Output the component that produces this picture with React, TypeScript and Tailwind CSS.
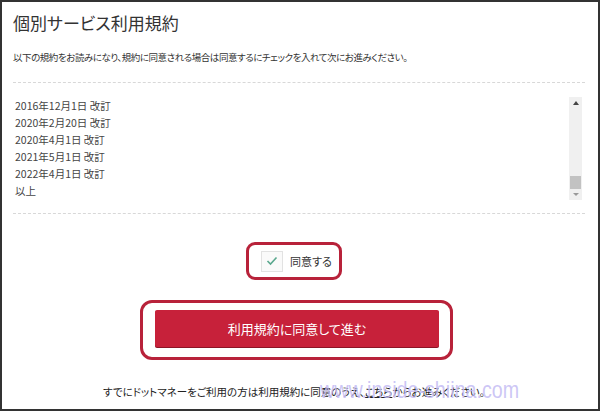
import React from "react"

const history = [
  "2016年12月1日 改訂",
  "2020年2月20日 改訂",
  "2020年4月1日 改訂",
  "2021年5月1日 改訂",
  "2022年4月1日 改訂",
  "以上",
]

export default function App() {
  return (
    <div className="relative w-[600px] h-[411px] overflow-hidden border-2 border-[#333] bg-white text-[#333] font-['Noto_Sans_CJK_JP',sans-serif] [font-feature-settings:'palt']">
      <div className="pl-[11px] pr-[13px] pt-[9px]">
        <h1 className="text-[17px] leading-[24px] font-normal">個別サービス利用規約</h1>
        <p className="mt-[14px] text-[9.5px] leading-[16px] tracking-[-0.45px]">
          以下の規約をお読みになり、規約に同意される場合は同意するにチェックを入れて次にお進みください。
        </p>
        <div className="mt-[17px] border-t border-dashed border-[#d8d8d8]" />

        {/* terms box, scrolled to the end */}
        <div className="mt-[14px] flex h-[103px]">
          <div className="flex-1 pl-[2px] text-[10.5px] leading-[17px] text-[#444]">
            {history.map(line => (
              <div key={line}>{line}</div>
            ))}
          </div>
          <div className="mr-[3px] flex w-[13px] flex-col items-center bg-[#f0f0f0]">
            <div className="mt-[4px] h-0 w-0 border-x-[3px] border-b-[4px] border-x-transparent border-b-[#444]" />
            <div className="flex-1" />
            <div className="h-[13px] w-[11px] bg-[#c2c2c2]" />
            <div className="my-[4px] h-0 w-0 border-x-[3px] border-t-[3px] border-x-transparent border-t-[#999]" />
          </div>
        </div>
        <div className="mt-[13px] border-t border-dashed border-[#d8d8d8]" />
      </div>

      <div className="mt-[28px] flex justify-center pr-[12px]">
        <label className="flex items-center rounded-[9px] border-[3px] border-[#b8223a] pl-[12px] pr-[7px] h-[38px]">
          <span className="flex h-[21px] w-[22px] items-center justify-center border border-[#e2e2e2] bg-[#fafafa]">
            <svg width="12" height="10" viewBox="0 0 12 10">
              <polyline points="1.5,5 4.5,8 10.5,1.5" fill="none" stroke="#5aa88e" strokeWidth="1.6" />
            </svg>
          </span>
          <span className="ml-[7px] text-[11px] leading-[16px]">同意する</span>
        </label>
      </div>

      <div className="mt-[20px] flex justify-center pr-[7px]">
        <div className="rounded-[12px] border-[3px] border-[#b8223a] pt-[7px] pb-[10px] pl-[12px] pr-[11px]">
          <button className="h-[37px] w-[284px] rounded-[2px] bg-[#c7213a] text-[13px] text-white shadow-[0_1px_0_#8c1426]">
            利用規約に同意して進む
          </button>
        </div>
      </div>

      <p className="mt-[24px] pr-[12px] text-center text-[10.5px] leading-[16px] text-[#222]">
        すでにドットマネーをご利用の方は利用規約に同意のうえ、
        <span className="underline">こちら</span>からお進みください。
      </p>

      {/* watermark */}
      <div className="absolute left-[318px] top-[376px] origin-left scale-x-[0.82] whitespace-nowrap font-['Liberation_Sans',sans-serif] text-[24px] leading-[24px] text-[#c4bcf4]/85">
        www.inside-shiina.com
      </div>
    </div>
  )
}
